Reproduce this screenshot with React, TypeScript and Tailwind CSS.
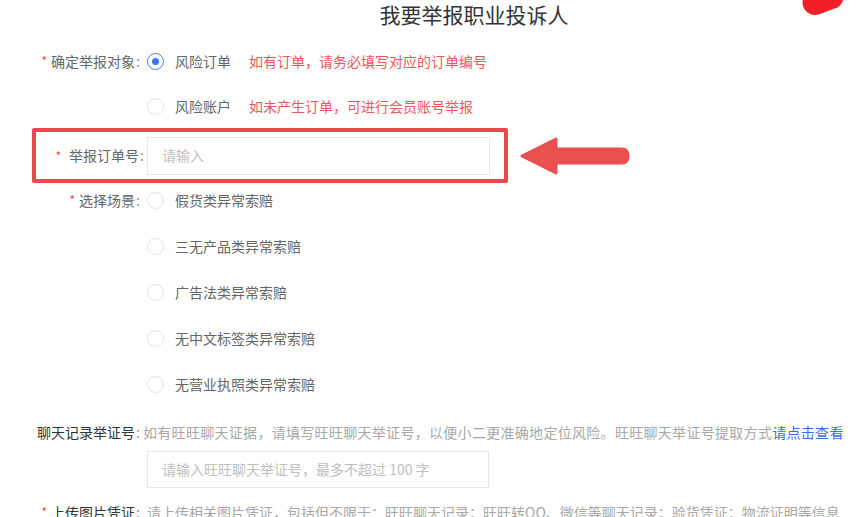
import React from "react";

const font = { fontFamily: '"Noto Sans CJK SC", "Noto Sans", sans-serif' };

function Radio({ checked = false }: { checked?: boolean }) {
  return checked ? (
    <span className="flex h-[17px] w-[17px] shrink-0 items-center justify-center rounded-full border border-[#4d7ef2] bg-white">
      <span className="h-[7px] w-[7px] rounded-full bg-[#3f73f0]" />
    </span>
  ) : (
    <span className="h-[17px] w-[17px] shrink-0 rounded-full border border-[#e3e3e3] bg-white" />
  );
}

function Label({ text, star = true, dark = false, w = "w-[143px]", gap = "mr-[4px]" }: { text: string; star?: boolean; dark?: boolean; w?: string; gap?: string }) {
  return (
    <div className={`${w} shrink-0 flex items-center justify-end pr-[3px] text-[14px] ${dark ? "text-[#333]" : "text-[#666]"}`}>
      {star && <span className={`${gap} text-[#e8464a] text-[12px]`}>*</span>}
      <span>{text}</span>
      <span className="ml-[1px] text-[#999]">:</span>
    </div>
  );
}

function RadioRow({ label, hint, checked, children }: { label: string; hint?: string; checked?: boolean; children?: React.ReactNode }) {
  return (
    <div className="flex h-[46px] items-center">
      {children ?? <div className="w-[147px] shrink-0" />}
      <Radio checked={checked} />
      <span className="ml-[11px] text-[14px] text-[#666]">{label}</span>
      {hint && <span className="ml-[18px] text-[14px] text-[#e9585b]">{hint}</span>}
    </div>
  );
}

export default function App() {
  const scenes = ["假货类异常索赔", "三无产品类异常索赔", "广告法类异常索赔", "无中文标签类异常索赔", "无营业执照类异常索赔"];
  return (
    <div className="relative h-[517px] w-[852px] overflow-hidden bg-white" style={font}>
      {/* red annotation blob */}
      <div className="absolute left-[802px] top-[-13px] h-[25px] w-[42px] rotate-[-20deg] rounded-full bg-[#f21f26]" />

      <div className="flex h-[38px] items-start justify-center pl-[96px]">
        <h1 className="text-[21px] leading-[28px] text-[#333]">我要举报职业投诉人</h1>
      </div>

      <RadioRow label="风险订单" hint="如有订单，请务必填写对应的订单编号" checked>
        <div className="w-[147px] shrink-0 flex">
          <Label text="确定举报对象" />
        </div>
      </RadioRow>
      <div className="flex h-[44px] items-center">
        <div className="w-[147px] shrink-0" />
        <Radio />
        <span className="ml-[11px] text-[14px] text-[#666]">风险账户</span>
        <span className="ml-[18px] text-[14px] text-[#e9585b]">如未产生订单，可进行会员账号举报</span>
      </div>

      <div className="mb-[-6px] flex items-center">
        <div className="ml-[32px] flex h-[55px] w-[476px] items-center rounded-[2px] border-[4px] border-[#e8494c]">
          <Label text="举报订单号" w="w-[111px]" gap="mr-[8px]" />
          <div className="flex h-[38px] w-[343px] items-center border border-[#e8e8e8] pl-[14px] text-[14px] text-[#c0c0c0]">请输入</div>
        </div>
        <svg className="ml-[10px]" width="114" height="40" viewBox="0 0 114 40">
          <path
            d="M4 20 L38 3 L38 13 L104 13 Q110 13 110 20 Q110 27 104 27 L38 27 L38 37 Z"
            fill="#ea4f50"
            stroke="#ea4f50"
            strokeWidth="3"
            strokeLinejoin="round"
          />
        </svg>
      </div>

      <div className="flex flex-col">
        {scenes.map((s, i) => (
          <RadioRow key={s} label={s}>
            <div className="w-[147px] shrink-0 flex">{i === 0 ? <Label text="选择场景" /> : null}</div>
          </RadioRow>
        ))}
      </div>

      <div className="mt-[13px] flex h-[24px] items-center whitespace-nowrap text-[14px]">
        <Label text="聊天记录举证号" star={false} dark />
        <span className="tracking-[0.3px] text-[#a8a8a8]">如有旺旺聊天证据，请填写旺旺聊天举证号，以便小二更准确地定位风险。旺旺聊天举证号提取方式</span>
        <span className="tracking-[0.3px] text-[#3a6cf0]">请点击查看</span>
      </div>

      <div className="mt-[7px] flex">
        <div className="w-[147px] shrink-0" />
        <div className="flex h-[37px] w-[342px] items-center border border-[#e8e8e8] pl-[14px] text-[14px] text-[#c0c0c0]">
          请输入旺旺聊天举证号，最多不超过 100 字
        </div>
      </div>

      <div className="mt-[12px] flex h-[24px] items-center whitespace-nowrap text-[14px]">
        <Label text="上传图片凭证" dark />
        <span className="ml-[4px] text-[#a8a8a8]">请上传相关图片凭证，包括但不限于：旺旺聊天记录；旺旺转QQ、微信等聊天记录；验货凭证；物流证明等信息</span>
      </div>
    </div>
  );
}
